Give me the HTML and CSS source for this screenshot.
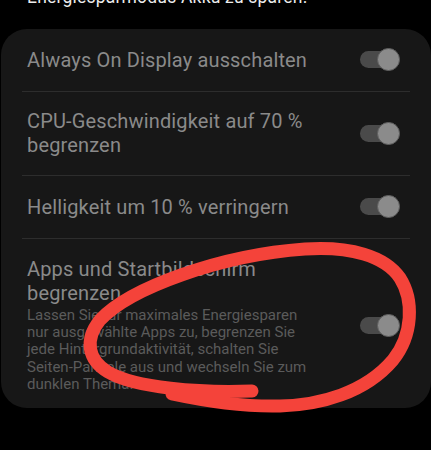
FILE: index.html
```html
<!DOCTYPE html>
<html lang="de">
<head>
<meta charset="utf-8">
<title>Energiesparmodus</title>
<link rel="stylesheet" href="styles.css">
</head>
<body>
<div class="screen">
  <p class="intro">Energiesparmodus Akku zu sparen.</p>
  <div class="card">
    <div class="row">
      <div class="text"><div class="title">Always On Display ausschalten</div></div>
      <div class="toggle"><span class="track"></span><span class="knob"></span></div>
    </div>
    <div class="row">
      <div class="text"><div class="title">CPU-Geschwindigkeit auf 70 % begrenzen</div></div>
      <div class="toggle"><span class="track"></span><span class="knob"></span></div>
    </div>
    <div class="row">
      <div class="text"><div class="title">Helligkeit um 10 % verringern</div></div>
      <div class="toggle"><span class="track"></span><span class="knob"></span></div>
    </div>
    <div class="row last">
      <div class="text">
        <div class="title">Apps und Startbildschirm begrenzen</div>
        <div class="desc">Lassen Sie für maximales Energiesparen nur ausgewählte Apps zu, begrenzen Sie jede Hintergrundaktivität, schalten Sie Seiten-Paneele aus und wechseln Sie zum dunklen Thema.</div>
      </div>
      <div class="toggle"><span class="track"></span><span class="knob"></span></div>
    </div>
  </div>
  <svg class="scribble" width="431" height="450" viewBox="0 0 431 450" aria-hidden="true">
    <path d="M252 391 C200 393 135 388 108 372 C88 360 84 340 100 320 C130 288 220 255 305 249 C350 246 385 256 400 278 C414 300 413 335 393 360 C365 393 320 405 280 406 C240 407 200 400 172 394" fill="none" stroke="#f4433a" stroke-width="13" stroke-linecap="round" stroke-linejoin="round"/>
  </svg>
</div>
</body>
</html>
```

FILE: styles.css
```css
html, body {
  margin: 0;
  padding: 0;
  background: #000;
}

.screen {
  position: relative;
  width: 431px;
  height: 450px;
  overflow: hidden;
  font-family: Roboto, "Noto Sans", "Liberation Sans", sans-serif;
}

.intro {
  margin: -15px 0 20px 27px;
  font-size: 17.5px;
  letter-spacing: 0.2px;
  line-height: 24px;
  color: #ececec;
  white-space: nowrap;
}

.card {
  margin-left: 1px;
  width: 430px;
  box-sizing: border-box;
  padding: 0 21px;
  background: #171717;
  border-radius: 26px;
}

.row {
  display: flex;
  align-items: center;
  gap: 45px;
  min-height: 63px;
  box-sizing: border-box;
  padding: 17px 10px 18px 5px;
  border-bottom: 1px solid #2d2d2d;
}

.row.last {
  border-bottom: none;
  padding: 18px 10px 15px 5px;
}

.text {
  flex: 1;
  min-width: 0;
}

.title {
  font-size: 20px;
  letter-spacing: 0.15px;
  line-height: 24px;
  color: #8a8a8a;
}

.desc {
  margin-top: 2px;
  font-size: 15px;
  line-height: 17.2px;
  color: #5b5b5b;
}

.toggle {
  position: relative;
  flex: none;
  width: 40px;
  height: 23px;
}

.track {
  position: absolute;
  left: 0;
  top: 3px;
  width: 39px;
  height: 17px;
  border-radius: 9px;
  background: #4a4a4a;
}

.knob {
  position: absolute;
  right: 0;
  top: 0;
  width: 21px;
  height: 21px;
  border-radius: 50%;
  background: #8b8b8b;
  border: 1px solid #5e5e5e;
}

.scribble {
  position: absolute;
  left: 0;
  top: 0;
  pointer-events: none;
}
```
